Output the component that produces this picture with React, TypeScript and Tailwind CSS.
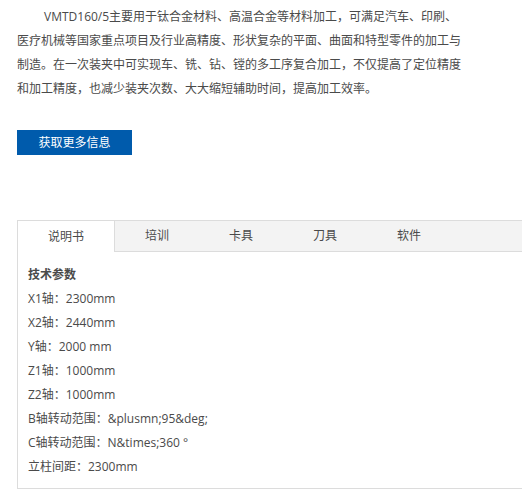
import React from 'react';

const tabs = ['说明书', '培训', '卡具', '刀具', '软件'];

const specs = [
  'X1轴：2300mm',
  'X2轴：2440mm',
  'Y轴：2000 mm',
  'Z1轴：1000mm',
  'Z2轴：1000mm',
  'B轴转动范围：&plusmn;95&deg;',
  'C轴转动范围：N&times;360 °',
  '立柱间距：2300mm',
];

const App: React.FC = () => {
  return (
    <div
      className="w-[522px] h-[491px] overflow-hidden bg-white text-[12px] text-[#4a4a4a]"
      style={{ fontFamily: '"Open Sans", "Noto Sans CJK SC", sans-serif' }}
    >
      <div className="pl-[17px] pt-[5px]">
        <p className="w-[448px] leading-[24px] indent-[27px]">
          VMTD160/5主要用于钛合金材料、高温合金等材料加工，可满足汽车、印刷、医疗机械等国家重点项目及行业高精度、形状复杂的平面、曲面和特型零件的加工与制造。在一次装夹中可实现车、铣、钻、镗的多工序复合加工，不仅提高了定位精度和加工精度，也减少装夹次数、大大缩短辅助时间，提高加工效率。
        </p>

        <a
          href="#"
          className="mt-[29px] flex h-[25px] w-[115px] items-center justify-center bg-[#005bac] text-white"
        >
          获取更多信息
        </a>

        <div className="mt-[65px] w-[520px] border border-r-0 border-[#dcdcdc]">
          <div className="flex h-[31px] bg-[#f3f3f3] border-b border-[#dcdcdc]">
            {tabs.map((tab, i) =>
              i === 0 ? (
                <div
                  key={tab}
                  className="flex w-[97px] items-center justify-center bg-white border-r border-[#dcdcdc] -mb-px"
                >
                  {tab}
                </div>
              ) : (
                <div key={tab} className="flex w-[84px] items-center justify-center">
                  {tab}
                </div>
              )
            )}
          </div>
          <div className="px-[10px] pt-[11px] pb-[9px] leading-[24px]">
            <div className="font-bold">技术参数</div>
            {specs.map((s) => (
              <div key={s}>{s}</div>
            ))}
          </div>
        </div>
      </div>
    </div>
  );
};

export default App;
